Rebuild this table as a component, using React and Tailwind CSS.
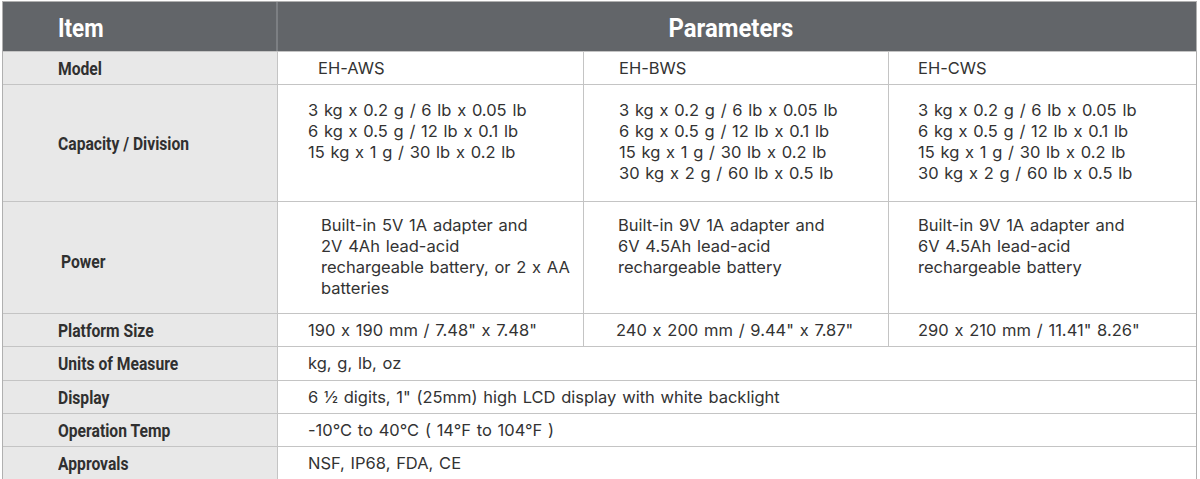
import React from 'react';

const labelFont = "font-['Roboto',sans-serif] font-bold";
const body = "font-['Inter',sans-serif] text-[16.5px] leading-[21px] [word-spacing:1.1px] text-[#333333] [font-feature-settings:'calt'_0]";

const capacity = [
  '3 kg x 0.2 g / 6 lb x 0.05 lb',
  '6 kg x 0.5 g / 12 lb x 0.1 lb',
  '15 kg x 1 g / 30 lb x 0.2 lb',
  '30 kg x 2 g / 60 lb x 0.5 lb',
];

function Lines({ items }) {
  return items.map((t) => <div key={t}>{t}</div>);
}

function Label({ children, h, extra = '' }) {
  return (
    <div className={`w-[275px] shrink-0 bg-[#e8e8e8] border-r border-[#c4c4c4] flex items-center pl-[55px] ${h} ${extra}`}>
      <span className={`inline-block origin-left scale-x-[0.87] text-[18px] text-[#303030] whitespace-nowrap ${labelFont}`}>
        {children}
      </span>
    </div>
  );
}

function Cell({ children, w, pad = 'pl-[30px]', top = '', last = false }) {
  return (
    <div className={`${w} ${pad} ${top} ${last ? '' : 'border-r border-[#c4c4c4]'} ${body}`}>
      {children}
    </div>
  );
}

export default function App() {
  const simple = [
    ['Units of Measure', 'kg, g, lb, oz', 'h-[33px]'],
    ['Display', '6 ½ digits, 1" (25mm) high LCD display with white backlight', 'h-[32px]'],
    ['Operation Temp', '-10°C to 40°C ( 14°F to 104°F )', 'h-[32px]'],
    ['Approvals', 'NSF, IP68, FDA, CE', 'h-[32px]'],
  ];

  return (
    <div className="bg-white w-[1200px] h-[479px] pt-[1px] pl-[2px]">
      <div className="w-[1195px] border border-[#b0b0b0]">
        <div className="flex h-[50px] bg-[#626569] border-b border-[#c4c4c4]">
          <div className="w-[275px] shrink-0 border-r-2 border-[#7c7f83] flex items-center pl-[55px] pt-[3px]">
            <span className={`inline-block origin-left scale-x-[0.86] text-[26px] text-white ${labelFont}`}>Item</span>
          </div>
          <div className="flex-1 flex items-center justify-center pr-[12px] pt-[3px]">
            <span className={`inline-block scale-x-[0.92] text-[26px] text-white ${labelFont}`}>Parameters</span>
          </div>
        </div>

        <div className="flex border-b border-[#c4c4c4]">
          <Label h="h-[32px]">Model</Label>
          <Cell w="w-[306px] flex items-center" pad="pl-[40px]">EH-AWS</Cell>
          <Cell w="w-[305px] flex items-center" pad="pl-[35px]">EH-BWS</Cell>
          <Cell w="flex-1 flex items-center" pad="pl-[29px]" last>EH-CWS</Cell>
        </div>

        <div className="flex border-b border-[#c4c4c4]">
          <Label h="h-[116px]">Capacity / Division</Label>
          <Cell w="w-[306px]" pad="pl-[30px]" top="pt-[15px]"><Lines items={capacity.slice(0, 3)} /></Cell>
          <Cell w="w-[305px]" pad="pl-[35px]" top="pt-[15px]"><Lines items={capacity} /></Cell>
          <Cell w="flex-1" pad="pl-[29px]" top="pt-[15px]" last><Lines items={capacity} /></Cell>
        </div>

        <div className="flex border-b border-[#c4c4c4]">
          <Label h="h-[111px]" extra="pl-[58px] pt-[8px]">Power</Label>
          <Cell w="w-[306px]" pad="pl-[43px]" top="pt-[13px]">
            <Lines items={['Built-in 5V 1A adapter and', '2V 4Ah lead-acid', 'rechargeable battery, or 2 x AA', 'batteries']} />
          </Cell>
          <Cell w="w-[305px]" pad="pl-[34px]" top="pt-[13px]">
            <Lines items={['Built-in 9V 1A adapter and', '6V 4.5Ah lead-acid', 'rechargeable battery']} />
          </Cell>
          <Cell w="flex-1" pad="pl-[29px]" top="pt-[13px]" last>
            <Lines items={['Built-in 9V 1A adapter and', '6V 4.5Ah lead-acid', 'rechargeable battery']} />
          </Cell>
        </div>

        <div className="flex border-b border-[#c4c4c4]">
          <Label h="h-[32px]">Platform Size</Label>
          <Cell w="w-[306px] flex items-center" pad="pl-[30px]">190 x 190 mm / 7.48" x 7.48"</Cell>
          <Cell w="w-[305px] flex items-center" pad="pl-[32px]">240 x 200 mm / 9.44" x 7.87"</Cell>
          <Cell w="flex-1 flex items-center" pad="pl-[29px]" last>290 x 210 mm / 11.41" 8.26"</Cell>
        </div>

        {simple.map(([k, v, h], i) => (
          <div key={k} className={`flex ${i < simple.length - 1 ? 'border-b border-[#c4c4c4]' : ''}`}>
            <Label h={h}>{k}</Label>
            <Cell w="flex-1 flex items-center" pad="pl-[30px]" last>{v}</Cell>
          </div>
        ))}
      </div>
    </div>
  );
}
